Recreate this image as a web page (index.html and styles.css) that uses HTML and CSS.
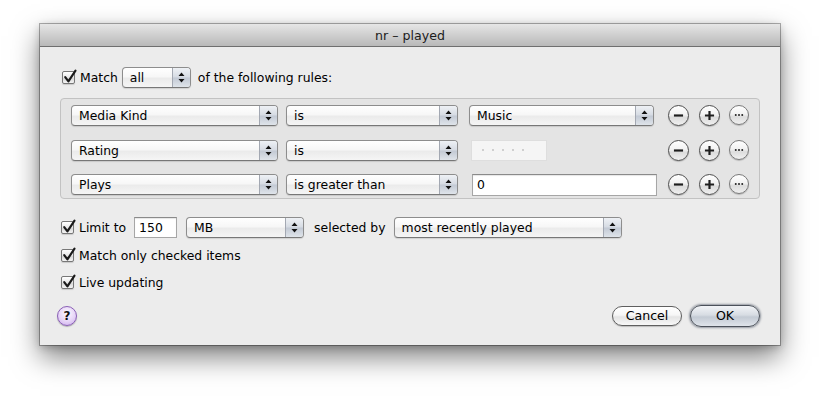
FILE: index.html
```html
<!DOCTYPE html>
<html>
<head>
<meta charset="utf-8">
<link rel="stylesheet" href="styles.css">
</head>
<body>
<div class="page">
  <div class="window">
    <div class="titlebar">nr – played</div>
    <div class="content">
      <div class="line match-line">
        <span class="cb"><svg viewBox="0 0 14 14"><path d="M3 6.6 L6 10.6 L12.6 0.6"/></svg></span>
        <span class="lbl">Match</span>
        <span class="popup popup-all"><span class="popup-label">all</span><span class="popup-arrows"><svg viewBox="0 0 7 11"><path d="M3.5 0.5 L6.5 4 L0.5 4 Z M3.5 10.5 L6.5 7 L0.5 7 Z"/></svg></span></span>
        <span class="lbl after-all">of the following rules:</span>
      </div>

      <div class="rules">
        <div class="rule">
          <span class="popup col1"><span class="popup-label">Media Kind</span><span class="popup-arrows"><svg viewBox="0 0 7 11"><path d="M3.5 0.5 L6.5 4 L0.5 4 Z M3.5 10.5 L6.5 7 L0.5 7 Z"/></svg></span></span>
          <span class="popup col2"><span class="popup-label">is</span><span class="popup-arrows"><svg viewBox="0 0 7 11"><path d="M3.5 0.5 L6.5 4 L0.5 4 Z M3.5 10.5 L6.5 7 L0.5 7 Z"/></svg></span></span>
          <span class="slot3">
            <span class="popup col3"><span class="popup-label">Music</span><span class="popup-arrows"><svg viewBox="0 0 7 11"><path d="M3.5 0.5 L6.5 4 L0.5 4 Z M3.5 10.5 L6.5 7 L0.5 7 Z"/></svg></span></span>
          </span>
          <span class="rbtns">
            <span class="round"><svg viewBox="0 0 20 20"><path d="M5.2 10 H14.8"/></svg></span>
            <span class="round"><svg viewBox="0 0 20 20"><path d="M5.2 10 H14.8 M10 5.2 V14.8"/></svg></span>
            <span class="round more"><svg viewBox="0 0 20 20"><circle cx="6.4" cy="10" r="1.1"/><circle cx="10" cy="10" r="1.1"/><circle cx="13.6" cy="10" r="1.1"/></svg></span>
          </span>
        </div>
        <div class="rule">
          <span class="popup col1"><span class="popup-label">Rating</span><span class="popup-arrows"><svg viewBox="0 0 7 11"><path d="M3.5 0.5 L6.5 4 L0.5 4 Z M3.5 10.5 L6.5 7 L0.5 7 Z"/></svg></span></span>
          <span class="popup col2"><span class="popup-label">is</span><span class="popup-arrows"><svg viewBox="0 0 7 11"><path d="M3.5 0.5 L6.5 4 L0.5 4 Z M3.5 10.5 L6.5 7 L0.5 7 Z"/></svg></span></span>
          <span class="slot3">
            <span class="stars"><i></i><i></i><i></i><i></i><i></i></span>
          </span>
          <span class="rbtns">
            <span class="round"><svg viewBox="0 0 20 20"><path d="M5.2 10 H14.8"/></svg></span>
            <span class="round"><svg viewBox="0 0 20 20"><path d="M5.2 10 H14.8 M10 5.2 V14.8"/></svg></span>
            <span class="round more"><svg viewBox="0 0 20 20"><circle cx="6.4" cy="10" r="1.1"/><circle cx="10" cy="10" r="1.1"/><circle cx="13.6" cy="10" r="1.1"/></svg></span>
          </span>
        </div>
        <div class="rule">
          <span class="popup col1"><span class="popup-label">Plays</span><span class="popup-arrows"><svg viewBox="0 0 7 11"><path d="M3.5 0.5 L6.5 4 L0.5 4 Z M3.5 10.5 L6.5 7 L0.5 7 Z"/></svg></span></span>
          <span class="popup col2"><span class="popup-label">is greater than</span><span class="popup-arrows"><svg viewBox="0 0 7 11"><path d="M3.5 0.5 L6.5 4 L0.5 4 Z M3.5 10.5 L6.5 7 L0.5 7 Z"/></svg></span></span>
          <span class="slot3">
            <span class="field col3field">0</span>
          </span>
          <span class="rbtns">
            <span class="round"><svg viewBox="0 0 20 20"><path d="M5.2 10 H14.8"/></svg></span>
            <span class="round"><svg viewBox="0 0 20 20"><path d="M5.2 10 H14.8 M10 5.2 V14.8"/></svg></span>
            <span class="round more"><svg viewBox="0 0 20 20"><circle cx="6.4" cy="10" r="1.1"/><circle cx="10" cy="10" r="1.1"/><circle cx="13.6" cy="10" r="1.1"/></svg></span>
          </span>
        </div>
      </div>

      <div class="line limit-line">
        <span class="cb"><svg viewBox="0 0 14 14"><path d="M3 6.6 L6 10.6 L12.6 0.6"/></svg></span>
        <span class="lbl">Limit to</span>
        <span class="field limit-field">150</span>
        <span class="popup popup-mb"><span class="popup-label">MB</span><span class="popup-arrows"><svg viewBox="0 0 7 11"><path d="M3.5 0.5 L6.5 4 L0.5 4 Z M3.5 10.5 L6.5 7 L0.5 7 Z"/></svg></span></span>
        <span class="lbl sel-by">selected by</span>
        <span class="popup popup-by"><span class="popup-label">most recently played</span><span class="popup-arrows"><svg viewBox="0 0 7 11"><path d="M3.5 0.5 L6.5 4 L0.5 4 Z M3.5 10.5 L6.5 7 L0.5 7 Z"/></svg></span></span>
      </div>
      <div class="line check-line first">
        <span class="cb"><svg viewBox="0 0 14 14"><path d="M3 6.6 L6 10.6 L12.6 0.6"/></svg></span>
        <span class="lbl">Match only checked items</span>
      </div>
      <div class="line check-line second">
        <span class="cb"><svg viewBox="0 0 14 14"><path d="M3 6.6 L6 10.6 L12.6 0.6"/></svg></span>
        <span class="lbl">Live updating</span>
      </div>

      <div class="bottom">
        <span class="help">?</span>
        <span class="actions">
          <span class="btn cancel">Cancel</span>
          <span class="btn ok">OK</span>
        </span>
      </div>
    </div>
  </div>
</div>
</body>
</html>
```

FILE: styles.css
```css
html, body {
  margin: 0;
  padding: 0;
  background: #ffffff;
  height: 100%;
}
body {
  font-family: "DejaVu Sans", "Liberation Sans", sans-serif;
  font-size: 12.4px;
  color: #000;
}
.page {
  padding: 24px 0 0 40px;
  min-height: 400px;
  box-sizing: border-box;
}
.window {
  width: 740px;
  height: 321px;
  background: #ececec;
  box-shadow: 0 0 0 1px rgba(0,0,0,0.3), 0 12px 26px rgba(0,0,0,0.5), 0 2px 8px rgba(0,0,0,0.2);
  display: flex;
  flex-direction: column;
}
.titlebar {
  height: 22px;
  line-height: 23px;
  text-align: center;
  font-size: 12.6px;
  color: #1c1c1c;
  background: linear-gradient(#e6e6e6, #cfcfcf 50%, #b9b9b9);
  border-bottom: 1px solid #6f6f6f;
}
.content {
  flex: 1;
  padding: 20px 20px 0 22px;
  display: flex;
  flex-direction: column;
}
.line {
  display: flex;
  align-items: center;
}
.match-line {
  height: 20px;
}
.cb {
  width: 13px;
  height: 13px;
  box-sizing: border-box;
  border: 1px solid #777;
  border-radius: 2px;
  background: linear-gradient(#ffffff, #e8e8e8 50%, #d6d6d6 55%, #f4f4f4);
  box-shadow: 0 1px 1px rgba(0,0,0,0.15);
  position: relative;
  flex: none;
}
.cb svg {
  position: absolute;
  left: -1px;
  top: -2px;
  width: 15px;
  height: 15px;
  overflow: visible;
}
.cb svg path {
  fill: none;
  stroke: #1a1a1a;
  stroke-width: 2;
  stroke-linecap: round;
  stroke-linejoin: round;
}
.lbl {
  margin-left: 5px;
  white-space: nowrap;
}
.popup {
  display: flex;
  height: 21px;
  box-sizing: border-box;
  border: 1px solid #8d8d8d;
  border-bottom-color: #777;
  border-radius: 4px;
  background: linear-gradient(#ffffff, #f7f7f7 45%, #ebebeb 55%, #f5f5f5);
  box-shadow: 0 1px 1px rgba(0,0,0,0.12);
  flex: none;
}
.popup-label {
  flex: 1;
  padding-left: 7px;
  line-height: 19px;
  white-space: nowrap;
  overflow: hidden;
}
.popup-arrows {
  width: 17px;
  border-left: 1px solid #a3a8b2;
  border-radius: 0 3px 3px 0;
  background: linear-gradient(#eef1f5, #d6dbe3 48%, #c2c9d4 52%, #dfe4ea);
  display: flex;
  align-items: center;
  justify-content: center;
}
.popup-arrows svg {
  width: 7px;
  height: 11px;
}
.popup-arrows svg path {
  fill: #111;
}
.popup-all {
  width: 69px;
  margin-left: 4px;
}
.after-all {
  margin-left: 7px;
}
.rules {
  margin: 11px 0 0 -2px;
  height: 101px;
  box-sizing: border-box;
  border: 1px solid #c2c2c2;
  border-radius: 4px;
  background: #e4e4e4;
  padding: 6px 0 0 10px;
  display: flex;
  flex-direction: column;
  gap: 13.5px;
}
.rule {
  display: flex;
  align-items: center;
  height: 21px;
}
.col1 { width: 207px; }
.col2 { width: 172px; margin-left: 8px; }
.slot3 {
  width: 188px;
  margin-left: 11px;
  display: flex;
  align-items: center;
  flex: none;
}
.col3 { width: 185px; }
.stars {
  width: 76px;
  height: 21px;
  box-sizing: border-box;
  margin-left: 2px;
  background: #f5f5f5;
  border: 1px solid #dedede;
  display: flex;
  align-items: center;
  gap: 8px;
  padding-left: 10px;
}
.stars i {
  width: 2px;
  height: 2px;
  background: #c2c2c2;
  border-radius: 1px;
}
.field {
  height: 22px;
  box-sizing: border-box;
  background: #fff;
  border: 1px solid #a6a6a6;
  border-top-color: #8a8a8a;
  box-shadow: inset 0 1px 1px rgba(0,0,0,0.1);
  padding-left: 4px;
  line-height: 20px;
  flex: none;
}
.col3field {
  width: 185px;
  margin-left: 3px;
}
.rbtns {
  display: flex;
  margin-left: 11px;
  gap: 10px;
  flex: none;
}
.rbtns .more {
  margin-left: -1px;
}
.round {
  width: 21px;
  height: 21px;
  box-sizing: border-box;
  border-radius: 50%;
  border: 1px solid #4f4f4f;
  background: linear-gradient(#ffffff, #f2f2f2 45%, #dcdcdc 60%, #f0f0f0);
  box-shadow: 0 1px 1px rgba(0,0,0,0.2);
  display: flex;
  align-items: center;
  justify-content: center;
}
.round svg {
  width: 19px;
  height: 19px;
}
.round svg path {
  stroke: #1e1e1e;
  stroke-width: 2.3;
  fill: none;
}
.round.more {
  width: 20px;
  height: 20px;
  border-color: #7a7a7a;
}
.round.more svg {
  width: 18px;
  height: 18px;
}
.round.more svg circle {
  fill: #222;
}
.limit-line {
  margin-top: 18px;
  height: 21px;
}
.limit-line .cb {
  margin-left: -1px;
}
.limit-field {
  width: 43px;
  height: 21px;
  line-height: 19px;
  margin-left: 8px;
}
.popup-mb {
  width: 118px;
  margin-left: 9px;
}
.sel-by {
  margin-left: 10px;
}
.popup-by {
  width: 228px;
  margin-left: 8px;
}
.check-line {
  height: 18px;
}
.check-line .cb {
  margin-left: -1px;
}
.check-line.first {
  margin-top: 8px;
}
.check-line.second {
  margin-top: 9px;
}
.bottom {
  margin-top: 13px;
  height: 24px;
  display: flex;
  align-items: center;
  justify-content: space-between;
}
.help {
  width: 20px;
  height: 20px;
  box-sizing: border-box;
  margin-left: -5px;
  border-radius: 50%;
  border: 1px solid #8a5fb6;
  background: radial-gradient(circle at 50% 35%, #fdfaff, #e6d4f7 55%, #c9a6ea);
  box-shadow: 0 1px 1px rgba(0,0,0,0.25);
  font-weight: bold;
  font-size: 12px;
  line-height: 18px;
  text-align: center;
  color: #111;
}
.actions {
  display: flex;
  align-items: center;
  gap: 8px;
}
.btn {
  display: block;
  height: 20px;
  box-sizing: border-box;
  border-radius: 10px;
  text-align: center;
  line-height: 18px;
  font-size: 12.6px;
}
.cancel {
  width: 70px;
  border: 1px solid #5f5f5f;
  background: linear-gradient(#ffffff, #f6f6f6 45%, #e4e4e4 55%, #f8f8f8);
  box-shadow: 0 1px 1px rgba(0,0,0,0.2);
}
.ok {
  width: 70px;
  height: 22px;
  line-height: 20px;
  border-radius: 11px;
  border: 1px solid #4b515a;
  background: linear-gradient(#f2f4f7, #d7dce3 45%, #c3cad4 55%, #dfe4ea);
  box-shadow: 0 0 2px 1px rgba(40,50,70,0.45);
}
```
